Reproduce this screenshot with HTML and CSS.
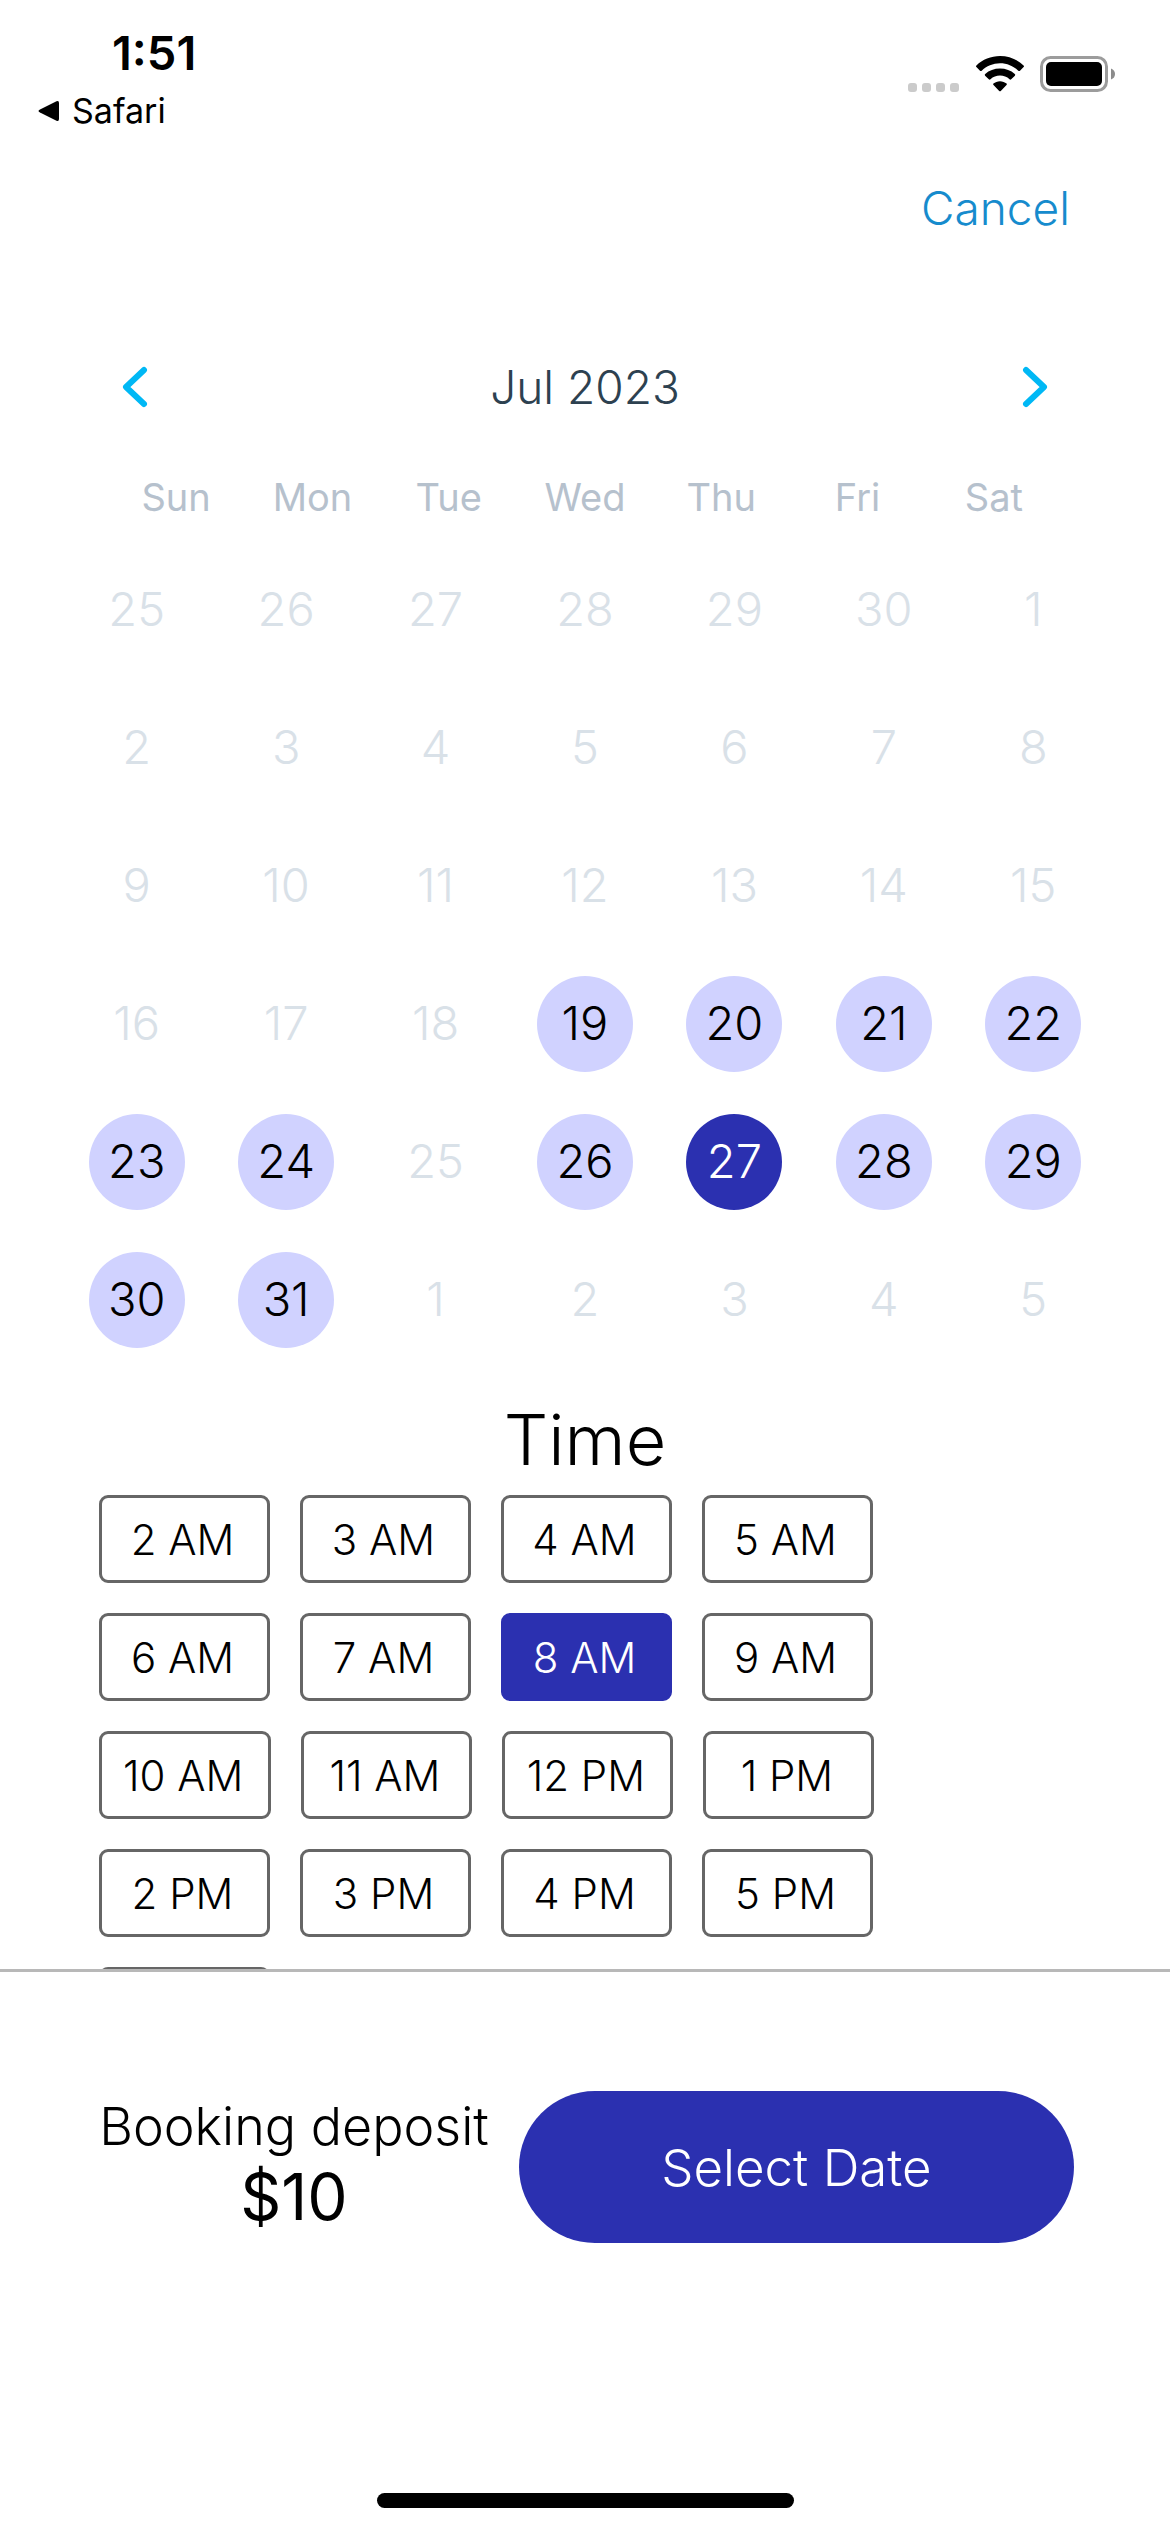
FILE: index.html
```html
<!DOCTYPE html>
<html lang="en">
<head>
<meta charset="utf-8">
<meta name="viewport" content="width=device-width, initial-scale=1">
<title>Select a date</title>
<link rel="stylesheet" href="styles.css">
</head>
<body>
<header class="status">
  <div class="status-left">
    <span class="clock">1:51</span>
    <a class="back" href="#">
      <svg width="22" height="22" viewBox="0 0 22 22" aria-hidden="true"><path d="M2 9.400 18.500 1.300Q21 .3 21 3V19Q21 21.700 18.500 20.700L2 12.600Q-1 11 2 9.400Z"/></svg>
      Safari
    </a>
  </div>
  <div class="status-icons">
    <svg width="52" height="9" viewBox="0 0 52 9" fill="#cbcbcb" aria-hidden="true"><rect width="9" height="9" rx="3"/><rect x="14" width="9" height="9" rx="3"/><rect x="28" width="9" height="9" rx="3"/><rect x="42" width="9" height="9" rx="3"/></svg>
    <svg class="wifi" width="48" height="36" viewBox="0 0 48 36" aria-hidden="true"><path d="M24 7.200C31 7.200 37.500 10 42.300 14.700Q43.200 15.500 44 14.700L47.600 11.100Q48.400 10.300 47.600 9.500C41.500 3.500 33 0 24 0S6.500 3.500.4 9.500Q-.4 10.300.4 11.100L4 14.700Q4.800 15.500 5.700 14.700C10.500 10 17 7.200 24 7.200Z"/><path d="M24 19.600C27.500 19.600 31 20.900 33.500 23.300Q34.400 24 35.200 23.300L38.900 19.700Q39.700 18.900 38.800 18C34.900 14.500 29.700 12.600 24 12.600S13.100 14.500 9.200 18Q8.300 18.900 9.100 19.700L12.800 23.300Q13.600 24 14.500 23.300C17 20.900 20.500 19.600 24 19.600Z"/><path d="M30.600 27.600Q31.300 28.300 30.500 29.100L24.800 34.900Q24 35.600 23.200 34.900L17.500 29.100Q16.700 28.300 17.400 27.600C19.200 26.100 21.500 25.200 24 25.200S28.800 26.100 30.600 27.600Z"/></svg>
    <svg class="battery" width="76" height="36" viewBox="0 0 76 36" aria-hidden="true"><rect x="1.500" y="1.500" width="65" height="33" rx="9" fill="none" stroke="#9c9c9c" stroke-width="3"/><rect x="6" y="6" width="56" height="24" rx="5"/><path d="M71 12.500Q75 14 75 18T71 23.500Z" fill="#8c8c8c"/></svg>
  </div>
</header>

<div class="toolbar"><button class="cancel" type="button">Cancel</button></div>

<main class="content">
  <section class="calendar" aria-label="Date">
    <div class="month">
      <button class="arrow" type="button" aria-label="Previous month"><svg width="26" height="42" viewBox="0 0 26 42"><path d="M22 4 4 21 22 38"/></svg></button>
      <h1 class="month-name">Jul 2023</h1>
      <button class="arrow" type="button" aria-label="Next month"><svg width="26" height="42" viewBox="0 0 26 42"><path d="M4 4 22 21 4 38"/></svg></button>
    </div>
    <div class="weekdays"><span>Sun</span><span>Mon</span><span>Tue</span><span>Wed</span><span>Thu</span><span>Fri</span><span>Sat</span></div>
    <div class="days">
      <button class="day" disabled>25</button><button class="day" disabled>26</button><button class="day" disabled>27</button><button class="day" disabled>28</button><button class="day" disabled>29</button><button class="day" disabled>30</button><button class="day" disabled>1</button>
      <button class="day" disabled>2</button><button class="day" disabled>3</button><button class="day" disabled>4</button><button class="day" disabled>5</button><button class="day" disabled>6</button><button class="day" disabled>7</button><button class="day" disabled>8</button>
      <button class="day" disabled>9</button><button class="day" disabled>10</button><button class="day" disabled>11</button><button class="day" disabled>12</button><button class="day" disabled>13</button><button class="day" disabled>14</button><button class="day" disabled>15</button>
      <button class="day" disabled>16</button><button class="day" disabled>17</button><button class="day" disabled>18</button><button class="day open">19</button><button class="day open">20</button><button class="day open">21</button><button class="day open">22</button>
      <button class="day open">23</button><button class="day open">24</button><button class="day" disabled>25</button><button class="day open">26</button><button class="day chosen">27</button><button class="day open">28</button><button class="day open">29</button>
      <button class="day open">30</button><button class="day open">31</button><button class="day" disabled>1</button><button class="day" disabled>2</button><button class="day" disabled>3</button><button class="day" disabled>4</button><button class="day" disabled>5</button>
    </div>
  </section>

  <section class="time">
    <h2 class="time-title">Time</h2>
    <div class="slots">
      <div class="slot-row"><button class="slot">2 AM</button><button class="slot">3 AM</button><button class="slot">4 AM</button><button class="slot">5 AM</button></div>
      <div class="slot-row"><button class="slot">6 AM</button><button class="slot">7 AM</button><button class="slot chosen-slot">8 AM</button><button class="slot">9 AM</button></div>
      <div class="slot-row"><button class="slot">10 AM</button><button class="slot">11 AM</button><button class="slot">12 PM</button><button class="slot">1 PM</button></div>
      <div class="slot-row"><button class="slot">2 PM</button><button class="slot">3 PM</button><button class="slot">4 PM</button><button class="slot">5 PM</button></div>
      <div class="slot-row"><button class="slot" aria-label="6 PM"></button></div>
    </div>
  </section>
</main>

<footer class="footer">
  <div class="booking">
    <p class="deposit"><span class="deposit-label">Booking deposit</span><span class="deposit-sum">$10</span></p>
    <button class="select" type="button">Select Date</button>
  </div>
  <div class="home-bar"></div>
</footer>
</body>
</html>
```
FILE: styles.css
```css
* { box-sizing: border-box; }

body {
  margin: 0;
  height: 100vh;
  display: flex;
  flex-direction: column;
  background: #fff;
  color: #000;
  font-family: Inter, "Liberation Sans", sans-serif;
}

button {
  padding: 0;
  border: 0;
  background: none;
  color: inherit;
  font: inherit;
}

h1, h2, p { margin: 0; }

.status {
  flex: none;
  display: flex;
  justify-content: space-between;
  padding: 24px 54px 0 38px;
}

.status-left {
  display: flex;
  flex-direction: column;
}

.clock {
  padding-left: 74px;
  font-size: 47px;
  font-weight: 600;
  line-height: 58px;
}

.back {
  display: flex;
  align-items: center;
  gap: 12px;
  color: #000;
  font-size: 34px;
  line-height: 58px;
  text-decoration: none;
}

.status-icons {
  display: flex;
  align-items: flex-end;
  gap: 16px;
  height: 68px;
}

.toolbar {
  flex: none;
  display: flex;
  justify-content: flex-end;
  padding: 38px 100px 0;
}

.cancel {
  color: #168bcd;
  font-size: 46px;
  font-weight: 300;
  line-height: 60px;
}

.content {
  flex: 1;
  min-height: 0;
  overflow: hidden;
  padding-top: 119px;
}

.month {
  display: flex;
  align-items: center;
  justify-content: space-between;
  padding: 0 122px;
}

.arrow {
  display: flex;
}

.arrow path {
  fill: none;
  stroke: #00b8f5;
  stroke-width: 6;
  stroke-linecap: round;
  stroke-linejoin: round;
}

.month-name {
  color: #2d4150;
  font-size: 46px;
  font-weight: 300;
  line-height: 60px;
}

.weekdays {
  display: grid;
  grid-template-columns: repeat(7, 1fr);
  padding: 56px 108px 0;
  color: #b6c1cd;
  font-size: 38px;
  line-height: 48px;
  text-align: center;
}

.days {
  display: grid;
  grid-template-columns: repeat(7, 1fr);
  row-gap: 42px;
  justify-items: center;
  padding: 41px 62px 0;
}

.day {
  width: 96px;
  height: 96px;
  padding-bottom: 3px;
  border-radius: 50%;
  font-size: 47px;
  font-weight: 300;
}

.day:disabled { color: #d9e1e8; }

.open { background: #d0d2ff; }

.chosen {
  background: #2b30b0;
  color: #fff;
}

.time { padding-top: 52px; }

.time-title {
  font-size: 70px;
  font-weight: 300;
  line-height: 80px;
  text-align: center;
}

.slots {
  display: flex;
  flex-direction: column;
  gap: 30px;
  padding: 15px 99px 0;
}

.slot-row {
  display: flex;
  gap: 30px;
}

.slot {
  min-width: 171px;
  height: 88px;
  padding: 0 25px 0 21px;
  border: 3px solid #666;
  border-radius: 9px;
  font-size: 42px;
  font-weight: 300;
}

.chosen-slot {
  border-color: #2b30b0;
  background: #2b30b0;
  color: #fff;
}

.footer {
  flex: none;
  border-top: 3px solid #b8b8b8;
  padding-bottom: 24px;
}

.booking {
  display: grid;
  grid-template-columns: 390fr 555fr;
  gap: 30px;
  align-items: center;
  padding: 119px 96px 0 99px;
}

.deposit {
  display: flex;
  flex-direction: column;
  align-items: center;
  white-space: nowrap;
}

.deposit-label {
  font-size: 52px;
  font-weight: 300;
  line-height: 60px;
}

.deposit-sum {
  font-size: 64px;
  font-weight: 400;
  line-height: 80px;
}

.select {
  height: 152px;
  border-radius: 76px;
  background: #2b30b0;
  color: #fff;
  font-size: 51px;
  font-weight: 300;
}

.home-bar {
  width: 417px;
  height: 15px;
  margin: 250px auto 0;
  border-radius: 8px;
  background: #000;
}
```
